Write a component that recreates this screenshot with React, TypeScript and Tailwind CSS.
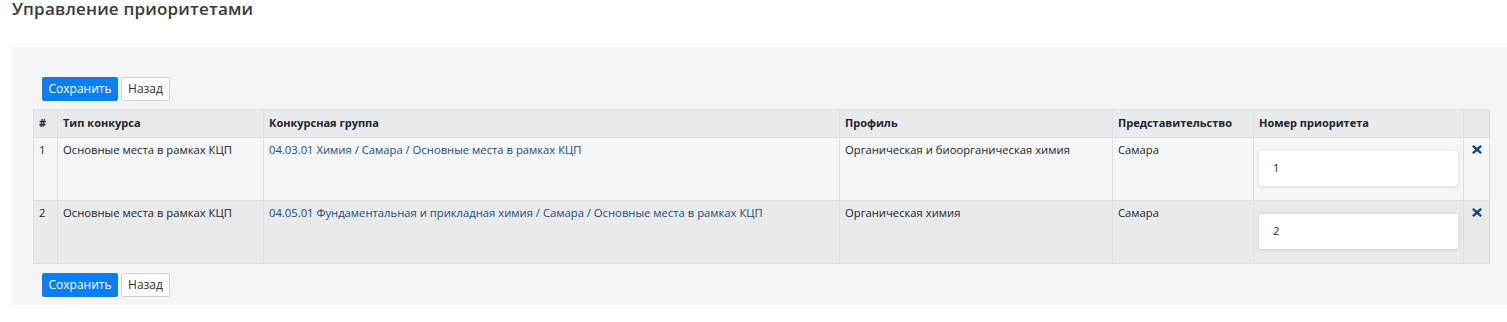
import React from 'react'

const rows = [
  {
    n: 1,
    type: 'Основные места в рамках КЦП',
    group: '04.03.01 Химия / Самара / Основные места в рамках КЦП',
    profile: 'Органическая и биоорганическая химия',
    office: 'Самара',
    priority: '1',
  },
  {
    n: 2,
    type: 'Основные места в рамках КЦП',
    group: '04.05.01 Фундаментальная и прикладная химия / Самара / Основные места в рамках КЦП',
    profile: 'Органическая химия',
    office: 'Самара',
    priority: '2',
  },
]

function Buttons() {
  return (
    <div className="ml-[9px] flex gap-[3px]">
      <button className="h-[24px] w-[76px] rounded-[2px] bg-[#0d7ef2] text-[12px] text-white">Сохранить</button>
      <button className="h-[24px] w-[49px] rounded-[2px] border border-[#cfd3d8] bg-white text-[12px] text-[#333]">
        Назад
      </button>
    </div>
  )
}

function RemoveIcon() {
  return (
    <svg className="h-[9px] w-[10px] text-[#1b4a7c]" viewBox="0 0 10 9" fill="currentColor">
      <path d="M1.6 0 L5 2.7 L8.4 0 L10 1.5 L6.9 4.5 L10 7.5 L8.4 9 L5 6.3 L1.6 9 L0 7.5 L3.1 4.5 L0 1.5 Z" />
    </svg>
  )
}

export default function App() {
  const th = 'h-[28px] border border-[#dcdfe3] px-[5px] text-left align-middle text-[11px] font-bold'
  const td = 'border border-[#dcdfe3] px-[5px] pt-[4px] align-top'

  return (
    <div className="min-h-[322px] bg-white text-[#212529]" style={{ fontFamily: '"Open Sans", "Liberation Sans", sans-serif' }}>
      <h1 className="px-[12px] text-[17px] font-semibold leading-[17px] tracking-[0.2px] text-[#3a3a3a]">Управление приоритетами</h1>

      <div className="ml-[12px] mt-[30px] bg-[#f4f5f7] pb-[8px] pl-[21px] pt-[30px]">
        <Buttons />

        <table className="mt-[8px] w-[1456px] table-fixed border-collapse text-[11.25px]">
          <colgroup>
            <col className="w-[24px]" />
            <col className="w-[206px]" />
            <col className="w-[576px]" />
            <col className="w-[273px]" />
            <col className="w-[141px]" />
            <col className="w-[210px]" />
            <col className="w-[26px]" />
          </colgroup>
          <thead>
            <tr className="bg-[#e8eaed]">
              <th className={th}>#</th>
              <th className={th}>Тип конкурса</th>
              <th className={th}>Конкурсная группа</th>
              <th className={th}>Профиль</th>
              <th className={th}>Представительство</th>
              <th className={th}>Номер приоритета</th>
              <th className={th}></th>
            </tr>
          </thead>
          <tbody>
            {rows.map((r) => (
              <tr key={r.n} className={r.n % 2 === 0 ? 'h-[63px] bg-[#e9eaec]' : 'h-[63px] bg-[#f5f6f8]'}>
                <td className={td}>{r.n}</td>
                <td className={td}>{r.type}</td>
                <td className={`${td} text-[#1f4b7a]`}>{r.group}</td>
                <td className={td}>{r.profile}</td>
                <td className={td}>{r.office}</td>
                <td className={`${td} pt-[13px]`}>
                  <div className="flex h-[35px] w-[199px] items-center rounded-[2px] bg-white pl-[14px] shadow-[0_1px_4px_rgba(0,0,0,0.12)]">
                    {r.priority}
                  </div>
                </td>
                <td className={`${td} pt-[7px]`}>
                  <div className="flex justify-center">
                    <RemoveIcon />
                  </div>
                </td>
              </tr>
            ))}
          </tbody>
        </table>

        <div className="mt-[9px]">
          <Buttons />
        </div>
      </div>
    </div>
  )
}
